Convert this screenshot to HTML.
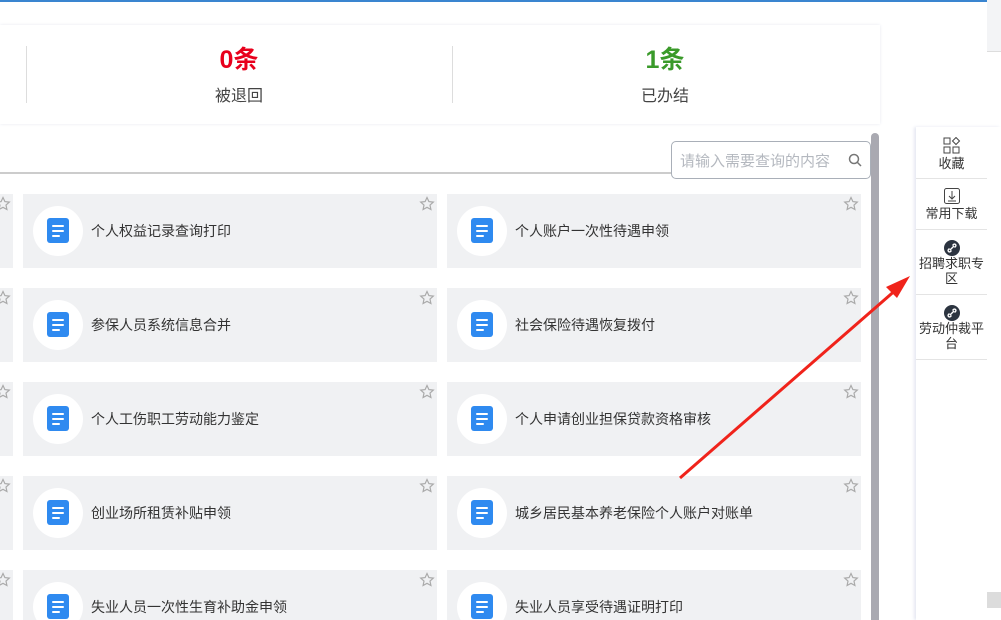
<!DOCTYPE html>
<html style="width:1001px;height:620px;overflow:hidden"><head><meta charset="utf-8"><style>
*{margin:0;padding:0;box-sizing:border-box}
body{width:1001px;height:620px;overflow:hidden;background:#fff;position:relative;font-family:"Liberation Sans","Noto Sans CJK SC",sans-serif;color:#333}
.abs{position:absolute}
.card{position:absolute;width:414px;height:74px;background:#f0f1f3}
.circ{position:absolute;left:10px;top:12px;width:50px;height:50px;border-radius:50%;background:#fff}
.doc{position:absolute;left:14px;top:12px;width:22px;height:25px;border-radius:3px;background:#2f8af0}
.doc i{position:absolute;left:5px;height:2px;background:#fff;border-radius:1px}
.t{position:absolute;left:68px;top:27px;font-size:14px;color:#333;white-space:nowrap}
.star{position:absolute;right:2px;top:2px}
.side{position:absolute;left:916px;width:71px;text-align:center;font-size:13px;color:#333;border-bottom:1px solid #e4e4e4;line-height:15px}
</style></head><body>
<div class="abs" style="left:0;top:0;width:987px;height:2px;background:#3a85d0"></div>
<div class="abs" style="left:987px;top:0;width:14px;height:52px;background:#f3f4f6;border-bottom:1px solid #ddd"></div>
<div class="abs" style="left:987px;top:592px;width:14px;height:16px;background:#dcdcdc"></div>
<div class="abs" style="left:0;top:25px;width:880px;height:99px;background:#fff;box-shadow:0 0 3px #e6e8f0"></div>
<div class="abs" style="left:26px;top:46px;width:1px;height:57px;background:#ddd"></div>
<div class="abs" style="left:452px;top:46px;width:1px;height:57px;background:#ddd"></div>
<div class="abs" style="left:139px;top:40px;width:200px;text-align:center;font-size:25px;font-weight:bold;color:#e8001c">0条</div>
<div class="abs" style="left:139px;top:82px;width:200px;text-align:center;font-size:16px;color:#444">被退回</div>
<div class="abs" style="left:565px;top:40px;width:200px;text-align:center;font-size:25px;font-weight:bold;color:#3a9a2a">1条</div>
<div class="abs" style="left:565px;top:82px;width:200px;text-align:center;font-size:16px;color:#444">已办结</div>
<div class="abs" style="left:0;top:172px;width:672px;height:2px;background:#ccc"></div>
<div class="abs" style="left:671px;top:141px;width:200px;height:38px;border:1px solid #a9afb8;border-radius:5px;background:#fff;font-size:15px;color:#b4b8bf;padding:8px 0 0 8px;white-space:nowrap">请输入需要查询的内容
<svg class="abs" style="left:176px;top:11px" width="14" height="14" viewBox="0 0 14 14"><circle cx="6" cy="6" r="4.5" fill="none" stroke="#777" stroke-width="1.5"/><path d="M9.5 9.5L13 13" stroke="#777" stroke-width="1.5"/></svg></div>
<div class="abs" style="left:871px;top:133px;width:8px;height:487px;border-radius:4px 4px 0 0;background:#a9a9b1"></div>
<div class="abs" style="left:916px;top:127px;width:85px;height:493px;background:#fff;box-shadow:-2px 0 3px #e6e8f2"></div>
<div class="abs" style="left:987px;top:592px;width:14px;height:16px;background:#dcdcdc"></div>
<div class="side" style="top:127px;height:52px;padding-top:10px">
<svg width="18" height="18" viewBox="0 0 18 18" style="display:block;margin:0 auto 1px"><rect x="1" y="1" width="6" height="6" fill="none" stroke="#444"/><rect x="1" y="10" width="6" height="6" fill="none" stroke="#444"/><rect x="10" y="10" width="6" height="6" fill="none" stroke="#444"/><path d="M13 0.5L16.5 4 13 7.5 9.5 4Z" fill="none" stroke="#444"/></svg>收藏</div>
<div class="side" style="top:179px;height:51px;padding-top:9px">
<svg width="16" height="16" viewBox="0 0 16 16" style="display:block;margin:0 auto 2px"><rect x="0.5" y="0.5" width="15" height="15" rx="2" fill="none" stroke="#444"/><path d="M8 3v8M5 8l3 3 3-3M4 13h8" fill="none" stroke="#444"/></svg>常用下载</div>
<div class="side" style="top:230px;height:65px;padding-top:10px">
<svg width="16" height="16" viewBox="0 0 16 16" style="display:block;margin:0 auto 0"><circle cx="8" cy="8" r="8" fill="#2c3440"/><path d="M6 10l4-4M5.5 8.5l-1 1a1.4 1.4 0 002 2l1-1M10.5 7.5l1-1a1.4 1.4 0 00-2-2l-1 1" stroke="#fff" stroke-width="1.4" fill="none"/></svg>招聘求职专区</div>
<div class="side" style="top:295px;height:65px;padding-top:10px">
<svg width="16" height="16" viewBox="0 0 16 16" style="display:block;margin:0 auto 0"><circle cx="8" cy="8" r="8" fill="#2c3440"/><path d="M6 10l4-4M5.5 8.5l-1 1a1.4 1.4 0 002 2l1-1M10.5 7.5l1-1a1.4 1.4 0 00-2-2l-1 1" stroke="#fff" stroke-width="1.4" fill="none"/></svg>劳动仲裁平台</div>

<div id="cards"></div>
<script>
var L=[["个人权益记录查询打印","个人账户一次性待遇申领"],["参保人员系统信息合并","社会保险待遇恢复拨付"],["个人工伤职工劳动能力鉴定","个人申请创业担保贷款资格审核"],["创业场所租赁补贴申领","城乡居民基本养老保险个人账户对账单"],["失业人员一次性生育补助金申领","失业人员享受待遇证明打印"]];
var star='<svg class="star" width="16" height="16" viewBox="0 0 16 16"><path d="M8 1.5l1.9 4.1 4.4.5-3.3 3 .9 4.4L8 11.3 4.1 13.5 5 9.1 1.7 6.1l4.4-.5z" fill="none" stroke="#aaa" stroke-width="1.2"/></svg>';
var doc='<div class="circ"><div class="doc"><i style="top:7px;width:12px"></i><i style="top:12px;width:12px"></i><i style="top:17px;width:8px"></i></div></div>';
var h='';
for(var r=0;r<5;r++){var y=194+r*94;var hh=(r==4)?50:74;
h+='<div class="card" style="left:-401px;top:'+y+'px;height:'+hh+'px">'+star+'</div>';
for(var c=0;c<2;c++){h+='<div class="card" style="left:'+(23+c*424)+'px;top:'+y+'px;height:'+hh+'px">'+doc+'<div class="t">'+L[r][c]+'</div>'+star+'</div>';}}
document.getElementById('cards').innerHTML=h;
</script>
<svg class="abs" style="left:0;top:0" width="1001" height="620"><path d="M680 478L898 288" stroke="#f0231b" stroke-width="3"/><path d="M910 276L886 287 897 298Z" fill="#f0231b"/></svg>
</body></html>
